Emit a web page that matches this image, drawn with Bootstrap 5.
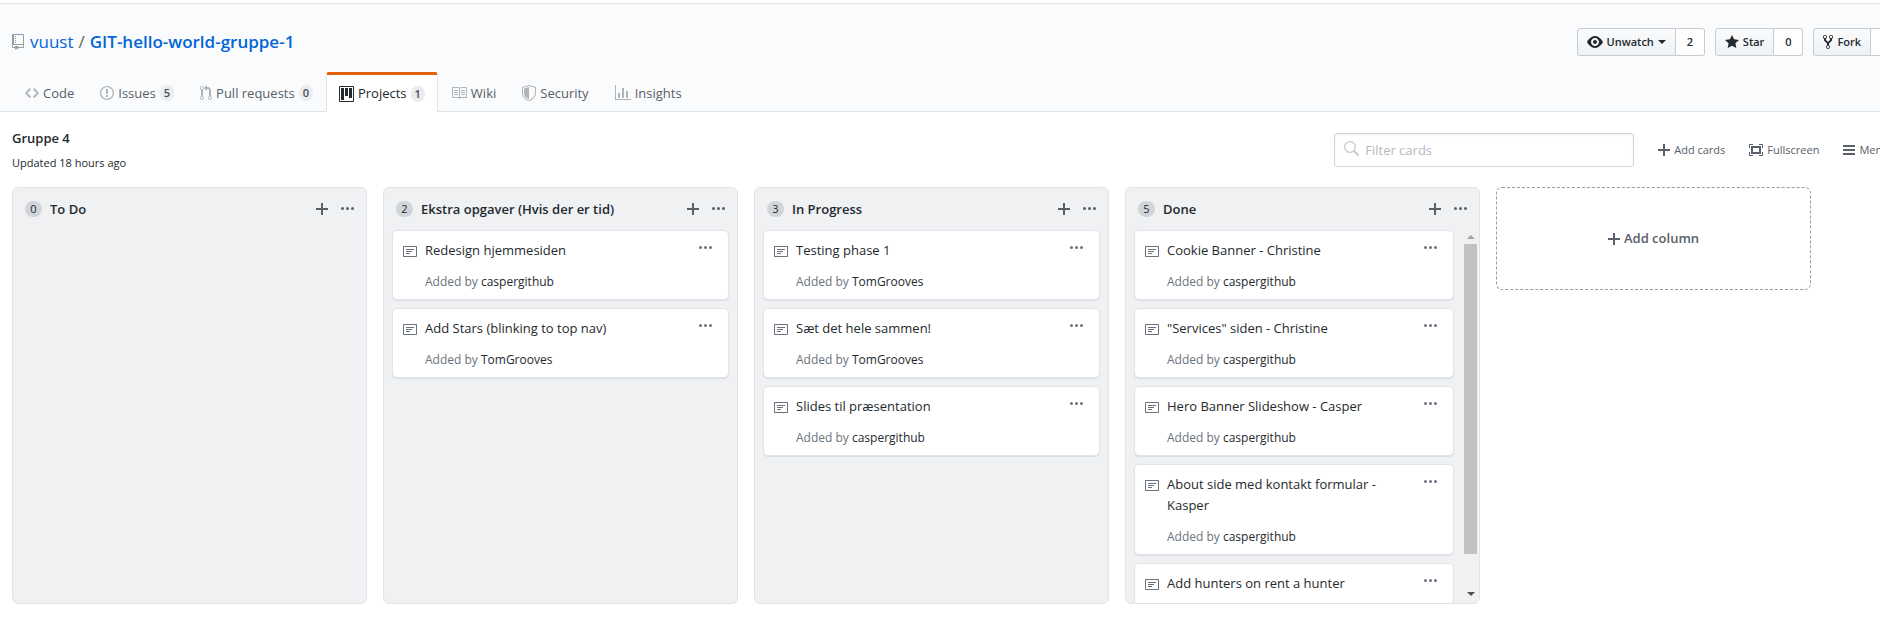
<!DOCTYPE html>
<html lang="en">
<head>
<meta charset="utf-8">
<meta name="viewport" content="width=device-width, initial-scale=1">
<title>Gruppe 4 · vuust/GIT-hello-world-gruppe-1</title>
<link href="https://cdn.jsdelivr.net/npm/bootstrap@5.3.0/dist/css/bootstrap.min.css" rel="stylesheet">
<style>
  body { font: 13px/21px "Open Sans", "Noto Sans", sans-serif; color: #24292e; background: #fff; overflow: hidden; }
  a { color: #0366d6; text-decoration: none; }
  svg { fill: currentColor; flex: none; display: block; }
  button { color: inherit; }
  /* the page runs a little wider than the window */
  .shell { width: calc(100% + 25px); }
  .repo-head { background: #fafbfc; border-top: 1px solid #e1e4e8; margin-top: 3px; padding-top: 24px; }
  .repo-row { height: 28px; margin-bottom: 16px; padding: 0 5px 0 12px; }
  .repo-name { font-size: 17px; line-height: 28px; font-weight: 400; }
  .repo-name strong { font-weight: 600; }
  .repo-name svg { color: #959da5; margin-right: 6px; }
  .repo-name .slash { color: #586069; margin: 0 5px; }
  .social { gap: 10px; font-size: 11px; font-weight: 600; line-height: 18px; }
  .social button { height: 28px; padding: 0 9px; gap: 4px; border: 1px solid #c8cbcf; border-radius: 3px 0 0 3px; background: linear-gradient(#fafbfc, #eff3f6 90%); font-weight: 600; }
  .social a { height: 28px; width: 29px; border: 1px solid #c8cbcf; border-left: 0; border-radius: 0 3px 3px 0; background: #fff; color: #24292e; }
  .social .caret { border: 4px solid transparent; border-top-color: currentColor; border-bottom: 0; }
  .tabs { border-bottom: 1px solid #e1e4e8; padding: 0 12px; }
  .tabs a { height: 39px; padding: 0 12px; border: 1px solid transparent; border-top: 3px solid transparent; border-bottom: 0; color: #586069; gap: 4px; }
  .tabs a svg { color: #b0b4b9; }
  .tabs a.active { background: #fff; border-color: #e36209 #e1e4e8; border-radius: 3px 3px 0 0; color: #24292e; margin-bottom: -1px; height: 40px; }
  .tabs a.active svg { color: #24292e; }
  .pill { background: #ebecee; border-radius: 20px; min-width: 13px; height: 16px; padding: 0 4px; font-size: 11px; line-height: 16px; font-weight: 600; color: #444d56; text-align: center; }
  .board-head { flex: none; height: 75px; padding: 0 16px 0 12px; }
  .board-head h1 { font-size: 13px; line-height: 21px; font-weight: 600; margin: 0 0 5px; }
  .board-head p { font-size: 11px; line-height: 18px; }
  .filter { width: 300px; position: relative; }
  .filter input { height: 34px; border: 1px solid #d1d5da; border-radius: 3px; padding: 0 8px 0 30px; font-size: 13px; box-shadow: inset 0 1px 2px rgba(27,31,35,.075); }
  .filter input::placeholder { color: #b4bac1; }
  .filter svg { position: absolute; left: 9px; top: 8px; color: #c6cbd1; }
  .tool { border: 0; background: none; padding: 0; color: #586069; font-size: 11px; line-height: 18px; gap: 4px; white-space: nowrap; }
  .board { gap: 16px; padding: 0 12px 13px; }
  .lane { flex: 0 0 355px; background: #eff1f3; border: 1px solid #e1e4e8; border-radius: 6px; overflow: hidden; }
  .lane-head { flex: none; height: 42px; padding: 0 12px; }
  .lane-head h2 { font-size: 13px; line-height: 21px; font-weight: 600; margin: 0 0 0 8px; }
  .lane-head .act + .act { margin-left: 13px; }
  .lane-count { background: #d1d5da; width: 17px; height: 16px; border-radius: 8px; font-size: 11px; line-height: 16px; text-align: center; }
  .act { border: 0; background: none; padding: 0; color: #586069; }
  .cards { padding: 0 8px; }
  .note { background: #fff; border: 1px solid #e1e4e8; border-radius: 5px; box-shadow: 0 1px 1px #d9dce0; margin-bottom: 8px; padding: 9px 16px 7px 10px; }
  .note .text { padding: 0 30px 0 8px; }
  .note svg { color: #6a737d; }
  .note .by { font-size: 12px; line-height: 21px; margin-top: 10px; color: #6a737d; }
  .note .by a { color: #24292e; }
  .scroll { flex: none; width: 17px; background: #f1f1f1; margin-left: 8px; }
  .scroll i { border: 4px solid transparent; height: 4px; margin: 5px auto; }
  .scroll .up { border-top: 0; border-bottom-color: #a3a3a3; }
  .scroll .down { border-bottom: 0; border-top-color: #505050; margin-top: auto; margin-bottom: 7px; }
  .scroll .thumb { width: 13px; height: 83%; background: #c1c1c1; margin: 0 auto; }
  .add-lane { width: 315px; height: 103px; border: 1px dashed #959da5; border-radius: 6px; background: #fff; color: #586069; font-weight: 600; gap: 4px; }
</style>
</head>
<body>
<svg width="0" height="0" class="position-absolute" aria-hidden="true">
  <symbol id="plus" viewBox="0 0 12 16"><path d="M12 9H7v5H5V9H0V7h5V2h2v5h5v2z"/></symbol>
  <symbol id="dots" viewBox="0 0 13 16"><path d="M1.5 9a1.5 1.5 0 1 0 0-3 1.5 1.5 0 0 0 0 3zm5 0a1.5 1.5 0 1 0 0-3 1.5 1.5 0 0 0 0 3zM13 7.5a1.5 1.5 0 1 1-3 0 1.5 1.5 0 0 1 3 0z"/></symbol>
  <symbol id="note" viewBox="0 0 14 16"><path fill-rule="evenodd" d="M3 10h4V9H3v1zm0-2h6V7H3v1zm0-2h8V5H3v1zm10 6H1V3h12v9zM1 2c-.55 0-1 .45-1 1v9c0 .55.45 1 1 1h12c.55 0 1-.45 1-1V3c0-.55-.45-1-1-1H1z"/></symbol>
</svg>
<div class="shell vh-100 d-flex flex-column">
  <header class="repo-head">
    <div class="repo-row d-flex align-items-center justify-content-between">
      <div class="repo-name d-flex align-items-center">
        <svg width="12" height="16" viewBox="0 0 12 16"><path d="M4 9H3V8h1v1zm0-3H3v1h1V6zm0-2H3v1h1V4zm0-2H3v1h1V2zm8-1v12c0 .55-.45 1-1 1H6v2l-1.5-1.5L3 16v-2H1c-.55 0-1-.45-1-1V1c0-.55.45-1 1-1h10c.55 0 1 .45 1 1zm-1 10H1v2h2v-1h3v1h5v-2zm0-10H2v9h9V1z"/></svg>
        <a href="#">vuust</a><span class="slash">/</span><strong><a href="#">GIT-hello-world-gruppe-1</a></strong>
      </div>
      <div class="social d-flex">
        <div class="d-flex">
          <button type="button" class="d-flex align-items-center"><svg width="16" height="16" viewBox="0 0 16 16"><path d="M8.06 2C3 2 0 8 0 8s3 6 8.06 6C13 14 16 8 16 8s-3-6-7.94-6zM8 12c-2.2 0-4-1.78-4-4 0-2.2 1.8-4 4-4 2.22 0 4 1.8 4 4 0 2.22-1.78 4-4 4zm2-4c0 1.11-.89 2-2 2-1.11 0-2-.89-2-2 0-1.11.89-2 2-2 1.11 0 2 .89 2 2z"/></svg>Unwatch<span class="caret"></span></button>
          <a href="#" class="d-flex align-items-center justify-content-center">2</a>
        </div>
        <div class="d-flex">
          <button type="button" class="d-flex align-items-center"><svg width="14" height="16" viewBox="0 0 14 16"><path d="M14 6l-4.9-.64L7 1 4.9 5.36 0 6l3.6 3.26L2.67 14 7 11.67 11.33 14l-.93-4.74L14 6z"/></svg>Star</button>
          <a href="#" class="d-flex align-items-center justify-content-center">0</a>
        </div>
        <div class="d-flex">
          <button type="button" class="d-flex align-items-center"><svg width="10" height="16" viewBox="0 0 10 16"><path d="M8 1a1.993 1.993 0 0 0-1 3.72V6L5 8 3 6V4.72A1.993 1.993 0 0 0 2 1a1.993 1.993 0 0 0-1 3.72V6.5l3 3v1.78A1.993 1.993 0 0 0 5 15a1.993 1.993 0 0 0 1-3.72V9.5l3-3V4.72A1.993 1.993 0 0 0 8 1zM2 4.2C1.34 4.2.8 3.65.8 3c0-.65.55-1.2 1.2-1.2.65 0 1.2.55 1.2 1.2 0 .65-.55 1.2-1.2 1.2zm3 10c-.66 0-1.2-.55-1.2-1.2 0-.65.55-1.2 1.2-1.2.65 0 1.2.55 1.2 1.2 0 .65-.55 1.2-1.2 1.2zm3-10c-.66 0-1.2-.55-1.2-1.2 0-.65.55-1.2 1.2-1.2.65 0 1.2.55 1.2 1.2 0 .65-.55 1.2-1.2 1.2z"/></svg>Fork</button>
          <a href="#" aria-label="Forks"></a>
        </div>
      </div>
    </div>
    <nav class="tabs d-flex">
      <a href="#" class="d-flex align-items-center"><svg width="14" height="16" viewBox="0 0 14 16"><path d="M9.5 3L8 4.5 11.5 8 8 11.5 9.5 13 14 8 9.5 3zm-5 0L0 8l4.5 5L6 11.5 2.5 8 6 4.5 4.5 3z"/></svg>Code</a>
      <a href="#" class="d-flex align-items-center"><svg width="14" height="16" viewBox="0 0 14 16"><path d="M7 2.3c3.14 0 5.7 2.56 5.7 5.7s-2.56 5.7-5.7 5.7A5.71 5.71 0 0 1 1.3 8c0-3.14 2.56-5.7 5.7-5.7zM7 1C3.14 1 0 4.14 0 8s3.14 7 7 7 7-3.14 7-7-3.14-7-7-7zm1 3H6v5h2V4zm0 6H6v2h2v-2z"/></svg>Issues <span class="pill">5</span></a>
      <a href="#" class="d-flex align-items-center"><svg width="12" height="16" viewBox="0 0 12 16"><path d="M11 11.28V5c-.03-.78-.34-1.47-.94-2.06C9.46 2.35 8.78 2.03 8 2H7V0L4 3l3 3V4h1c.27.02.48.11.69.31.21.2.3.42.31.69v6.28A1.993 1.993 0 0 0 10 15a1.993 1.993 0 0 0 1-3.72zm-1 2.92c-.66 0-1.2-.55-1.2-1.2 0-.65.55-1.2 1.2-1.2.65 0 1.2.55 1.2 1.2 0 .65-.55 1.2-1.2 1.2zM4 3c0-1.11-.89-2-2-2a1.993 1.993 0 0 0-1 3.72v6.56A1.993 1.993 0 0 0 2 15a1.993 1.993 0 0 0 1-3.72V4.72c.59-.34 1-.98 1-1.72zm-.8 10c0 .66-.55 1.2-1.2 1.2-.65 0-1.2-.55-1.2-1.2 0-.65.55-1.2 1.2-1.2.65 0 1.2.55 1.2 1.2zM2 4.2C1.34 4.2.8 3.65.8 3c0-.65.55-1.2 1.2-1.2.65 0 1.2.55 1.2 1.2 0 .65-.55 1.2-1.2 1.2z"/></svg>Pull requests <span class="pill">0</span></a>
      <a href="#" class="d-flex align-items-center active" aria-current="page"><svg width="15" height="16" viewBox="0 0 15 16"><path fill-rule="evenodd" d="M10 12h3V2h-3v10zm-4-2h3V2H6v8zm-4 4h3V2H2v12zm-1 1h13V1H1v14zM14 0H1a1 1 0 0 0-1 1v14a1 1 0 0 0 1 1h13a1 1 0 0 0 1-1V1a1 1 0 0 0-1-1z"/></svg>Projects <span class="pill">1</span></a>
      <a href="#" class="d-flex align-items-center"><svg width="16" height="16" viewBox="0 0 16 16"><path d="M3 5h4v1H3V5zm0 3h4V7H3v1zm0 2h4V9H3v1zm11-5h-4v1h4V5zm0 2h-4v1h4V7zm0 2h-4v1h4V9zm2-6v9c0 .55-.45 1-1 1H9.5l-1 1-1-1H2c-.55 0-1-.45-1-1V3c0-.55.45-1 1-1h5.5l1 1 1-1H15c.55 0 1 .45 1 1zm-8 .5L7.5 3H2v9h6V3.5zm7-.5H9.5l-.5.5V12h6V3z"/></svg>Wiki</a>
      <a href="#" class="d-flex align-items-center"><svg width="14" height="16" viewBox="0 0 14 16"><path fill-rule="evenodd" d="M0 2l7-2 7 2v6.02C14 12.69 8.69 16 7 16c-1.69 0-7-3.31-7-7.98V2zm1 .75L7 1l6 1.75v5.268C13 12.104 8.449 15 7 15c-1.449 0-6-2.896-6-6.982V2.75zm1 .75L7 2v12c-1.207 0-5-2.482-5-5.985V3.5z"/></svg>Security</a>
      <a href="#" class="d-flex align-items-center"><svg width="16" height="16" viewBox="0 0 16 16"><path d="M16 14v1H0V0h1v14h15zM5 13H3V8h2v5zm4 0H7V3h2v10zm4 0h-2V6h2v7z"/></svg>Insights</a>
    </nav>
  </header>
  <div class="board-head d-flex align-items-center">
    <div class="me-auto">
      <h1>Gruppe 4</h1>
      <p class="mb-0">Updated 18 hours ago</p>
    </div>
    <div class="filter">
      <input type="text" class="form-control" placeholder="Filter cards" aria-label="Filter cards">
      <svg width="16" height="16" viewBox="0 0 16 16"><path d="M15.7 13.3l-3.81-3.83A5.93 5.93 0 0 0 13 6c0-3.31-2.69-6-6-6S1 2.69 1 6s2.69 6 6 6c1.3 0 2.48-.41 3.47-1.11l3.83 3.81c.19.2.45.3.7.3.25 0 .52-.09.7-.3a.996.996 0 0 0 0-1.41v.01zM7 10.7c-2.59 0-4.7-2.11-4.7-4.7 0-2.59 2.11-4.7 4.7-4.7 2.59 0 4.7 2.11 4.7 4.7 0 2.59-2.11 4.7-4.7 4.7z"/></svg>
    </div>
    <div class="d-flex gap-4 ms-4">
      <button type="button" class="tool d-flex align-items-center"><svg width="12" height="16"><use href="#plus"/></svg>Add cards</button>
      <button type="button" class="tool d-flex align-items-center"><svg width="14" height="16" viewBox="0 0 14 16"><path fill-rule="evenodd" d="M13 10h1v3c0 .547-.453 1-1 1h-3v-1h3v-3zM1 10H0v3c0 .547.453 1 1 1h3v-1H1v-3zm0-7h3V2H1c-.547 0-1 .453-1 1v3h1V3zm1 1h10v8H2V4zm2 6h6V6H4v4zm6-8v1h3v3h1V3c0-.547-.453-1-1-1h-3z"/></svg>Fullscreen</button>
      <button type="button" class="tool d-flex align-items-center"><svg width="12" height="16" viewBox="0 0 12 16"><path d="M0 3h12v2H0zM0 7h12v2H0zM0 11h12v2H0z"/></svg>Menu</button>
    </div>
  </div>
  <main class="board d-flex flex-grow-1 overflow-hidden" id="board"></main>
</div>
<script>
  const lanes = [
    { name: 'To Do', count: 0, cards: [] },
    { name: 'Ekstra opgaver (Hvis der er tid)', count: 2, cards: [['Redesign hjemmesiden', 'caspergithub'], ['Add Stars (blinking to top nav)', 'TomGrooves']] },
    { name: 'In Progress', count: 3, cards: [['Testing phase 1', 'TomGrooves'], ['Sæt det hele sammen!', 'TomGrooves'], ['Slides til præsentation', 'caspergithub']] },
    { name: 'Done', count: 5, scroll: true, cards: [['Cookie Banner - Christine', 'caspergithub'], ['"Services" siden - Christine', 'caspergithub'], ['Hero Banner Slideshow - Casper', 'caspergithub'], ['About side med kontakt formular - Kasper', 'caspergithub'], ['Add hunters on rent a hunter', 'caspergithub']] }
  ];
  const icon = (id, w) => `<svg width="${w}" height="16"><use href="#${id}"/></svg>`;
  const card = ([text, by]) => `
    <article class="note d-flex align-items-start">
      <span class="pt-1">${icon('note', 14)}</span>
      <div class="text flex-grow-1"><div>${text}</div><div class="by">Added by <a href="#">${by}</a></div></div>
      <button type="button" class="act" aria-label="Card options">${icon('dots', 13)}</button>
    </article>`;
  document.getElementById('board').innerHTML = lanes.map(l => `
    <section class="lane d-flex flex-column">
      <div class="lane-head d-flex align-items-center">
        <span class="lane-count">${l.count}</span><h2 class="me-auto">${l.name}</h2>
        <button type="button" class="act" aria-label="Add a note">${icon('plus', 12)}</button>
        <button type="button" class="act" aria-label="Column options">${icon('dots', 13)}</button>
      </div>
      <div class="d-flex flex-grow-1 overflow-hidden">
        <div class="cards flex-grow-1${l.scroll ? ' pe-0' : ''}">${l.cards.map(card).join('')}</div>
        ${l.scroll ? '<div class="scroll d-flex flex-column"><i class="up"></i><div class="thumb"></div><i class="down"></i></div>' : ''}
      </div>
    </section>`).join('') +
    `<button type="button" class="add-lane d-flex align-items-center justify-content-center">${icon('plus', 12)}Add column</button>`;
</script>
<script src="https://cdn.jsdelivr.net/npm/bootstrap@5.3.0/dist/js/bootstrap.bundle.min.js"></script>
</body>
</html>
